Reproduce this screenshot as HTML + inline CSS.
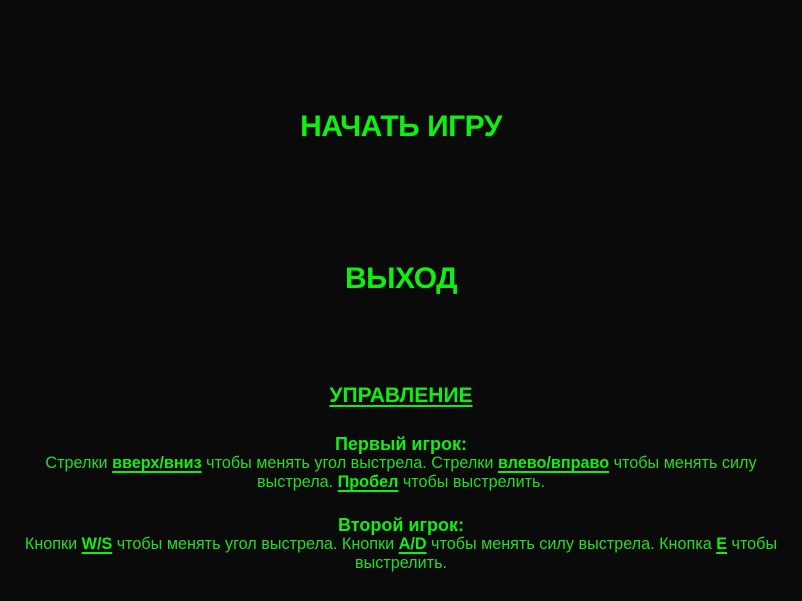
<!DOCTYPE html>
<html><head><meta charset="utf-8"><style>
html,body{margin:0;padding:0;background:#0a0a0a;width:802px;height:601px;overflow:hidden}
body{font-family:"Liberation Sans","DejaVu Sans",sans-serif;color:#1fe61f;text-align:center;position:relative}
.a{position:absolute;left:0;width:802px;font-weight:bold;color:#11ee11}
.t{font-size:30px;letter-spacing:-0.5px}
u{text-decoration-thickness:2px;text-underline-offset:3px}
.p{position:absolute;font-size:16.2px;line-height:19px;color:#22dd22}
.p b{color:#11ee11}
.h{font-size:18px;font-weight:bold;color:#11ee11;line-height:20px}
</style></head><body>
<div class="a t" style="top:110px">НАЧАТЬ ИГРУ</div>
<div class="a t" style="top:262px">ВЫХОД</div>
<div class="a" style="top:384px;font-size:21px"><u>УПРАВЛЕНИЕ</u></div>
<div class="p" style="top:434px;left:39px;width:724px"><div class="h">Первый игрок:</div>Стрелки <b><u>вверх/вниз</u></b> чтобы менять угол выстрела. Стрелки <b><u>влево/вправо</u></b> чтобы менять силу выстрела. <b><u>Пробел</u></b> чтобы выстрелить.</div>
<div class="p" style="top:515px;left:16px;width:770px"><div class="h">Второй игрок:</div>Кнопки <b><u>W/S</u></b> чтобы менять угол выстрела. Кнопки <b><u>A/D</u></b> чтобы менять силу выстрела. Кнопка <b><u>E</u></b> чтобы выстрелить.</div>
</body></html>
